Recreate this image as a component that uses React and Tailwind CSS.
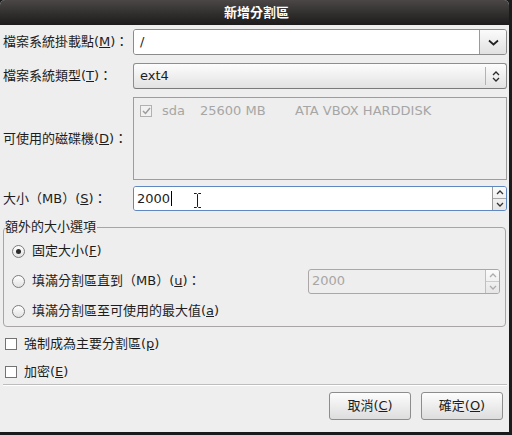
import React from 'react';

function ChevronDown({ color = '#222' }) {
  return (
    <svg width="11" height="7" viewBox="0 0 11 7">
      <path d="M1 1.5 L5.5 5.5 L10 1.5" stroke={color} strokeWidth="1.7" fill="none" />
    </svg>
  );
}

function UpDown() {
  return (
    <svg width="8" height="13" viewBox="0 0 8 13">
      <path d="M1 5 L4 2 L7 5 M1 8 L4 11 L7 8" stroke="#2a2a2a" strokeWidth="1.3" fill="none" />
    </svg>
  );
}

function SpinButtons({ disabled }) {
  const c = disabled ? '#b0abab' : '#333';
  return (
    <div className={`flex w-[14px] flex-col border-l ${disabled ? 'border-[#c2bebe]' : 'border-[#9a9a9a]'} bg-linear-to-b from-[#fbfbfb] to-[#e6e6e6]`}>
      <div className={`flex flex-1 items-center justify-center border-b ${disabled ? 'border-[#cfcbcb]' : 'border-[#a8a8a8]'}`}>
        <svg width="8" height="5" viewBox="0 0 8 5">
          <path d="M1 4 L4 1 L7 4" stroke={c} strokeWidth="1.3" fill="none" />
        </svg>
      </div>
      <div className="flex flex-1 items-center justify-center">
        <svg width="8" height="5" viewBox="0 0 8 5">
          <path d="M1 1 L4 4 L7 1" stroke={c} strokeWidth="1.3" fill="none" />
        </svg>
      </div>
    </div>
  );
}

function Radio({ checked }) {
  return (
    <span className="flex h-[13px] w-[13px] shrink-0 items-center justify-center rounded-full border border-[#7b7b7b] bg-linear-to-b from-white to-[#e2e2e2]">
      {checked && <span className="h-[5px] w-[5px] rounded-full bg-[#2b2b2b]" />}
    </span>
  );
}

function Check({ checked, disabled }) {
  return (
    <span
      className={`flex h-[12px] w-[12px] shrink-0 items-center justify-center border ${
        disabled ? 'border-[#b3b0b0] bg-[#f1f1f1]' : 'border-[#737373] bg-white'
      }`}
    >
      {checked && (
        <svg width="9" height="8" viewBox="0 0 9 8">
          <path d="M1 4 L3.5 6.5 L8 1" stroke={disabled ? '#9c9c9c' : '#222'} strokeWidth="1.5" fill="none" />
        </svg>
      )}
    </span>
  );
}

function Label({ children }) {
  return <div className="w-[130px] shrink-0 text-[13px] text-[#1d1d1d]">{children}</div>;
}

export default function App() {
  return (
    <div className="h-[435px] w-[512px] bg-[#1b1b1b] font-['DejaVu_Sans','Noto_Sans_CJK_TC',sans-serif]">
      <div className="flex h-[432px] w-[509px] flex-col overflow-hidden rounded-t-[5px] bg-[#eeeeee] text-[13px] text-[#1d1d1d]">
        <div className="flex h-[25px] shrink-0 items-center justify-center bg-linear-to-b from-[#4b4747] to-[#1d1b1b] pl-[4px] text-[13px] font-bold text-white">
          新增分割區
        </div>

        <div className="flex flex-col pl-[3px] pr-[2px]">
          {/* mount point */}
          <div className="mt-[4px] flex h-[26px] items-center">
            <Label>檔案系統掛載點(<u>M</u>)：</Label>
            <div className="flex h-full flex-1 overflow-hidden rounded-[3px] border border-[#8b8b8b]">
              <div className="flex flex-1 items-center bg-white pl-[6px]">/</div>
              <div className="flex w-[27px] items-center justify-center border-l border-[#9a9a9a] bg-linear-to-b from-[#fbfbfb] to-[#e1e1e1]">
                <ChevronDown />
              </div>
            </div>
          </div>

          {/* fs type */}
          <div className="mt-[8px] flex h-[26px] items-center">
            <Label>檔案系統類型(<u>T</u>)：</Label>
            <div className="flex h-full flex-1 items-center rounded-[3px] border border-[#8e8e8e] border-b-[#7a7a7a] bg-linear-to-b from-[#fdfdfd] to-[#e2e2e2] pl-[6px]">
              <span className="flex-1">ext4</span>
              <span className="h-[18px] w-px bg-[#b3b3b3]" />
              <span className="flex w-[20px] items-center justify-center">
                <UpDown />
              </span>
            </div>
          </div>

          {/* drives */}
          <div className="mt-[8px] flex h-[83px] items-center">
            <Label>可使用的磁碟機(<u>D</u>)：</Label>
            <div className="h-full flex-1 border border-[#9d9d9d] pl-[6px] pt-[6px] text-[#a6a6a6]">
              <div className="flex h-[14px] items-center">
                <Check checked disabled />
                <span className="ml-[10px] w-[38px]">sda</span>
                <span className="w-[95px]">25600 MB</span>
                <span>ATA VBOX HARDDISK</span>
              </div>
            </div>
          </div>

          {/* size */}
          <div className="mt-[6px] flex h-[25px] items-center">
            <Label>大小（MB）(<u>S</u>)：</Label>
            <div className="relative flex h-full flex-1 overflow-hidden rounded-[3px] border border-[#5f87c0]">
              <div className="flex flex-1 items-center bg-white pl-[3px]">
                2000
                <span className="ml-px h-[15px] w-px bg-black" />
              </div>
              <SpinButtons />
              <svg className="absolute left-[59px] top-[6px]" width="9" height="15" viewBox="0 0 9 15">
                <path d="M1 0.5 h2.5 l1 1 l1 -1 h2.5 M4.5 1.5 v12 M1 14.5 h2.5 l1 -1 l1 1 h2.5" stroke="#1a1a1a" strokeWidth="1" fill="none" />
              </svg>
            </div>
          </div>

          {/* extra size options */}
          <div className="relative mt-[16px] mr-[1px] rounded-[4px] border border-[#a9a5a5] pl-[8px] pt-[8px]">
            <span className="absolute -top-[9px] left-[1px] bg-[#eeeeee] pr-px leading-[15px]">額外的大小選項</span>
            <div className="flex h-[30px] items-center gap-[7px]">
              <Radio checked />
              <span>固定大小(<u>F</u>)</span>
            </div>
            <div className="flex h-[30px] items-center gap-[7px]">
              <Radio />
              <span>填滿分割區直到（MB）(<u>u</u>)：</span>
              <div className="ml-auto mr-[5px] flex h-[25px] w-[192px] overflow-hidden rounded-[3px] border border-[#aca7a7]">
                <div className="flex flex-1 items-center pl-[3px] text-[#a9a5a5]">2000</div>
                <SpinButtons disabled />
              </div>
            </div>
            <div className="flex h-[30px] items-center gap-[7px]">
              <Radio />
              <span>填滿分割區至可使用的最大值(<u>a</u>)</span>
            </div>
          </div>

          {/* checkboxes */}
          <div className="mt-[5px] flex h-[24px] items-center gap-[7px] pl-[2px]">
            <Check />
            <span>強制成為主要分割區(<u>p</u>)</span>
          </div>
          <div className="mt-[4px] flex h-[24px] items-center gap-[7px] pl-[2px]">
            <Check />
            <span>加密(<u>E</u>)</span>
          </div>

          <div className="border-t border-b border-t-[#bdbdbd] border-b-white" />

          <div className="mt-[6px] flex justify-end gap-[10px] pr-[4px]">
            <button className="h-[28px] w-[82px] rounded-[3px] border border-[#8d8d8d] bg-linear-to-b from-[#fdfdfd] to-[#dddddd] text-[13px] text-[#1d1d1d]">
              取消(<u>C</u>)
            </button>
            <button className="h-[28px] w-[82px] rounded-[3px] border border-[#8d8d8d] bg-linear-to-b from-[#fdfdfd] to-[#dddddd] text-[13px] text-[#1d1d1d]">
              確定(<u>O</u>)
            </button>
          </div>
        </div>
      </div>
    </div>
  );
}
